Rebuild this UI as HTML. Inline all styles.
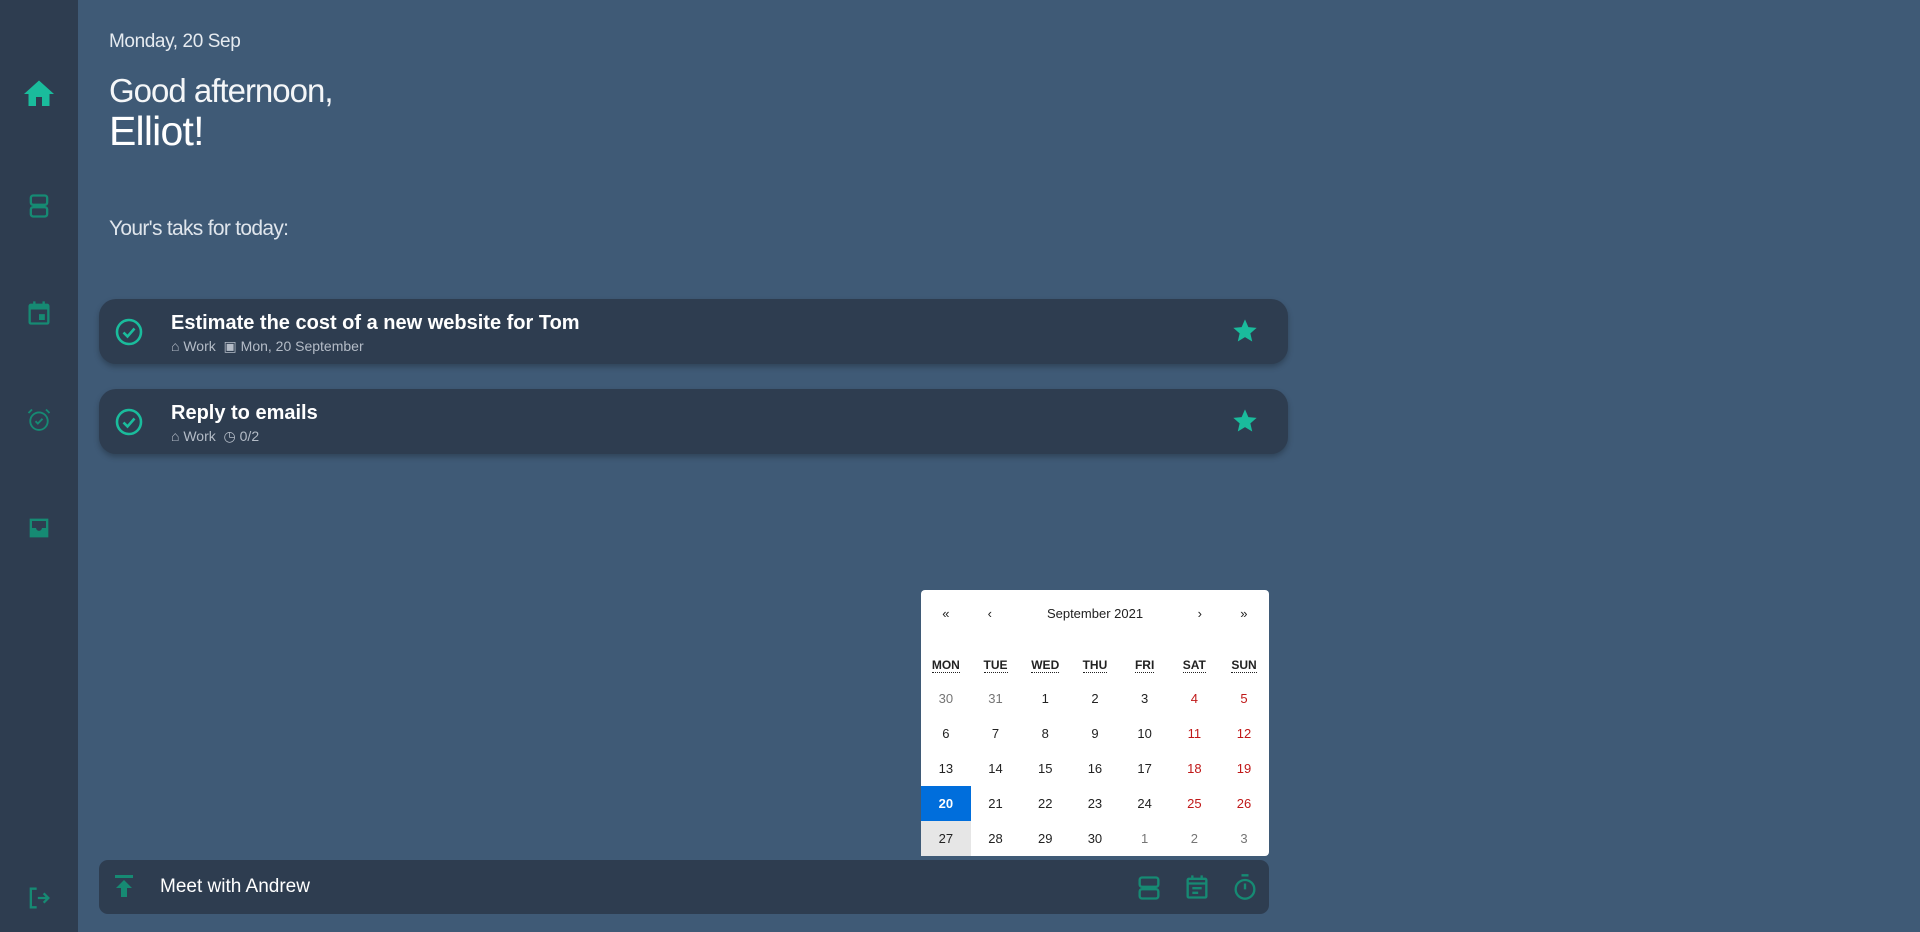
<!DOCTYPE html>
<html><head><meta charset="utf-8"><style>
*{margin:0;padding:0;box-sizing:border-box}
body{width:1920px;height:932px;background:#3f5a76;font-family:"Liberation Sans",sans-serif;position:relative;overflow:hidden;color:#fff}
.side{position:absolute;left:0;top:0;width:78px;height:932px;background:#2e3d50}
.si{position:absolute;left:25px;width:28px;height:28px}
.t{position:absolute;white-space:nowrap}
.card{position:absolute;left:99px;width:1189px;height:65px;background:#2e3d50;border-radius:17px;box-shadow:0 3px 6px rgba(0,0,0,.25)}
.cal{position:absolute;left:921px;top:590px;width:348px;height:266px;background:#fff;border-radius:4px;color:#222;font-size:13px}
.cal div{position:absolute;text-align:center;width:49.7px}
.bar{position:absolute;left:99px;top:860px;width:1170px;height:54px;background:#2e3d50;border-radius:9px}
</style></head><body>
<div class="side">
<svg class="si" style="top:76px;left:21px;width:36px;height:36px" viewBox="0 0 24 24"><path d="M10 20v-6h4v6h5v-8h3L12 3 2 12h3v8z" fill="#1abc9c"/></svg>
<svg class="si" style="top:192px" viewBox="0 0 24 24" fill="none" stroke="#168a73" stroke-width="2"><rect x="5" y="3" width="14" height="8" rx="2"/><rect x="5" y="13" width="14" height="8" rx="2"/></svg>
<svg class="si" style="top:299px" viewBox="0 0 24 24"><path d="M7 2v2H5a2 2 0 0 0-2 2v14a2 2 0 0 0 2 2h14a2 2 0 0 0 2-2V6a2 2 0 0 0-2-2h-2V2h-2v2H9V2zM5 9h14v11H5zm7 4v5h5v-5z" fill="#168a73"/></svg>
<svg class="si" style="top:406px" viewBox="0 0 24 24" fill="none" stroke="#168a73" stroke-width="1.6"><circle cx="12" cy="13" r="7.5"/><path d="M9 13l2 2 4-4M3 6l3-3M21 6l-3-3"/></svg>
<svg class="si" style="top:514px" viewBox="0 0 24 24"><path d="M4 4h16v16H4zm2 2v6h3.5a2.5 2.5 0 0 0 5 0H18V6z" fill="#168a73"/></svg>
<svg class="si" style="top:884px" viewBox="0 0 24 24" fill="none" stroke="#168a73" stroke-width="2"><path d="M10 4H5v16h5M11 12h9M16 8l4 4-4 4"/></svg>
</div>
<div class="t" style="left:109px;top:31px;font-size:19px;color:#e6ebf0;letter-spacing:-0.4px">Monday, 20 Sep</div>
<div class="t" style="left:109px;top:72px;font-size:33px;letter-spacing:-1px;color:#f4f6f8">Good afternoon,</div>
<div class="t" style="left:109px;top:108px;font-size:41px;letter-spacing:-0.8px">Elliot!</div>
<div class="t" style="left:109px;top:217px;font-size:21px;color:#dfe5ec;letter-spacing:-0.7px">Your's taks for today:</div>

<div class="card" style="top:299px">
<svg style="position:absolute;left:16px;top:19px" width="28" height="28" viewBox="0 0 28 28" fill="none" stroke="#1abc9c" stroke-width="2.6"><circle cx="14" cy="14" r="12"/><path d="M8.5 14.5l4 4 7-8"/></svg>
<div class="t" style="left:72px;top:13px;font-size:20px;font-weight:bold">Estimate the cost of a new website for Tom</div>
<div class="t" style="left:72px;top:39px;font-size:14px;color:#b4bcc7">⌂ Work &nbsp;▣ Mon, 20 September</div>
<svg style="position:absolute;left:1132px;top:18px" width="28" height="28" viewBox="0 0 24 24"><path d="M12 17.3l6.2 3.7-1.6-7 5.4-4.7-7.1-.6L12 2 9.1 8.7 2 9.3l5.4 4.7-1.6 7z" fill="#1abc9c"/></svg>
</div>
<div class="card" style="top:389px">
<svg style="position:absolute;left:16px;top:19px" width="28" height="28" viewBox="0 0 28 28" fill="none" stroke="#1abc9c" stroke-width="2.6"><circle cx="14" cy="14" r="12"/><path d="M8.5 14.5l4 4 7-8"/></svg>
<div class="t" style="left:72px;top:13px;font-size:20px;font-weight:bold">Reply to emails</div>
<div class="t" style="left:72px;top:39px;font-size:14px;color:#b4bcc7">⌂ Work &nbsp;◷ 0/2</div>
<svg style="position:absolute;left:1132px;top:18px" width="28" height="28" viewBox="0 0 24 24"><path d="M12 17.3l6.2 3.7-1.6-7 5.4-4.7-7.1-.6L12 2 9.1 8.7 2 9.3l5.4 4.7-1.6 7z" fill="#1abc9c"/></svg>
</div>

<div class="cal">
<div style="left:0;top:16px">«</div><div style="left:44px;top:16px">‹</div>
<div style="left:90px;top:16px;width:168px">September 2021</div>
<div style="left:254px;top:16px">›</div><div style="left:298px;top:16px">»</div>
</div>

<div class="bar">
<svg style="position:absolute;left:14px;top:14px" width="22" height="26" viewBox="0 0 22 26"><rect x="2" y="1" width="18" height="3" fill="#168a73"/><path d="M11 6l8 8h-5v9H8v-9H3z" fill="#168a73"/></svg>
<div class="t" style="left:61px;top:16px;font-size:19px">Meet with Andrew</div>
<svg style="position:absolute;left:1036px;top:14px" width="28" height="28" viewBox="0 0 24 24" fill="none" stroke="#168a73" stroke-width="2"><rect x="4" y="3" width="16" height="8" rx="2"/><rect x="4" y="13" width="16" height="8" rx="2"/></svg>
<svg style="position:absolute;left:1084px;top:13px" width="28" height="28" viewBox="0 0 24 24" fill="none" stroke="#168a73" stroke-width="2"><rect x="4" y="5" width="16" height="16" rx="1"/><path d="M8 2v4M16 2v4M4 9h16M8 13h8M8 17h5"/></svg>
<svg style="position:absolute;left:1132px;top:13px" width="28" height="28" viewBox="0 0 24 24" fill="none" stroke="#168a73" stroke-width="2"><circle cx="12" cy="14" r="8"/><path d="M9 2h6M12 9v5"/></svg>
</div>
<script>
var c=document.querySelector('.cal'),h='';
var d=['MON','TUE','WED','THU','FRI','SAT','SUN'];
d.forEach(function(s,i){h+='<div style="left:'+(i*49.7)+'px;top:68px;font-weight:bold;font-size:12px"><span style="border-bottom:1px dotted #222">'+s+'</span></div>';});
var r=[[30,31,1,2,3,4,5],[6,7,8,9,10,11,12],[13,14,15,16,17,18,19],[20,21,22,23,24,25,26],[27,28,29,30,1,2,3]];
r.forEach(function(row,ri){row.forEach(function(n,ci){
var col='#222',bg='',fw='normal';
if((ri==0&&ci<2)||(ri==4&&ci>3))col='#757575';else if(ci>4)col='#c01818';
if(ri==3&&ci==0){bg='#006edc';col='#fff';fw='bold'}
if(ri==4&&ci==0)bg='#e6e6e6';
h+='<div style="left:'+(ci*49.7)+'px;top:'+(91+ri*35)+'px;height:35px;line-height:35px;color:'+col+';background:'+bg+';font-weight:'+fw+'">'+n+'</div>';});});
c.insertAdjacentHTML('beforeend',h);
</script>
</body></html>
